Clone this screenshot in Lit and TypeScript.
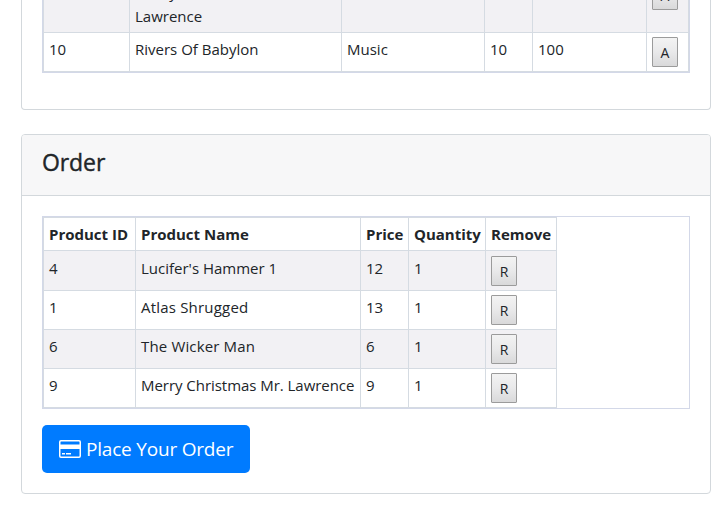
import { LitElement, html, css } from "lit";
import { customElement } from "lit/decorators.js";
import { styleMap } from "lit/directives/style-map.js";

interface OrderLine {
  id: number;
  name: string;
  price: number;
  quantity: number;
  tracking: number;
}

const LINES: OrderLine[] = [
  { id: 4, name: "Lucifer's Hammer 1", price: 12, quantity: 1, tracking: 0 },
  { id: 1, name: "Atlas Shrugged", price: 13, quantity: 1, tracking: 0.2 },
  { id: 6, name: "The Wicker Man", price: 6, quantity: 1, tracking: 0.15 },
  { id: 9, name: "Merry Christmas Mr. Lawrence", price: 9, quantity: 1, tracking: -0.04 },
];

@customElement("app-root")
export class AppRoot extends LitElement {
  static styles = css`
    :host {
      display: block;
      height: 524px;
      overflow: hidden;
      background: #fff;
      color: #212529;
      font: 15px/24px "Open Sans", "Noto Sans", sans-serif;
    }
    * { box-sizing: border-box; }
    .card {
      width: 690px;
      margin-left: 21px;
      border: 1px solid #d3d8dc;
      border-radius: 4px;
      padding: 0 20px;
    }
    .products {
      height: 110px;
      border-top: 0;
      border-radius: 0 0 4px 4px;
    }
    .order { margin-top: 24px; height: 360px; }
    .card-header {
      height: 61px;
      margin: 0 -20px 20px;
      padding: 13px 20px 0;
      border-bottom: 1px solid #d3d8dc;
      border-radius: 3px 3px 0 0;
      background: #f7f7f8;
    }
    h4 {
      margin: 0;
      font-size: 23px;
      line-height: 29px;
      font-weight: 500;
      letter-spacing: -0.1px;
      -webkit-text-stroke: 0.4px #212529;
    }
    .frame { width: 648px; border: 1px solid #d3d8e8; }
    .products .frame { height: 73px; border-top: 0; }
    .order .frame { height: 193px; }
    .row {
      display: grid;
      height: 39px;
      border-right: 1px solid #d5dbe2;
    }
    .products .row { grid-template-columns: 86px 212px 143px 48px 114px 1fr; }
    .order .row { width: 514px; grid-template-columns: 92px 225px 48px 77px 1fr; }
    .cell {
      border-left: 1px solid #d5dbe2;
      border-top: 1px solid #d5dbe2;
      padding: 4px 0 0 5px;
      white-space: nowrap;
      overflow: hidden;
    }
    .striped { background: #f2f1f4; }
    .products .partial { height: 32px; }
    .partial .cell { border-top: 0; padding-top: 0; display: flex; flex-direction: column; justify-content: flex-end; padding-bottom: 4px; }
    .partial .action { padding-bottom: 22px; }
    .products .last, .order .last { border-bottom: 1px solid #d5dbe2; height: 40px; }
    .order .head { height: 33px; font-weight: 700; }
    .order .first { height: 40px; }
    .first .cell { padding-top: 5px; }
    .t { display: block; height: 24px; }
    .small {
      display: block;
      width: 26px;
      height: 30px;
      flex: none;
      padding: 1px 0 0;
      border: 1px solid #9b9b9b;
      border-radius: 1px;
      background: linear-gradient(#f3f3f3, #e9e9ea 50%, #d9d9da);
      font: 14px/27px "Open Sans", "Noto Sans", sans-serif;
      color: #212529;
      text-align: center;
    }
    .place {
      display: flex;
      align-items: center;
      gap: 5px;
      width: 208px;
      height: 48px;
      margin-top: 16px;
      padding: 0 0 0 17px;
      border: 0;
      border-radius: 5px;
      background: #007bff;
      color: #fff;
      font: 19px/30px "Open Sans", "Noto Sans", sans-serif;
      letter-spacing: -0.2px;
      white-space: nowrap;
    }
    .place svg { flex: none; }
  `;

  render() {
    return html`
      <section class="card products">
        <div class="frame">
          <div class="row striped partial">
            <div class="cell"></div>
            <div class="cell"><span class="t">Merry Christmas Mr.</span><span class="t">Lawrence</span></div>
            <div class="cell"></div>
            <div class="cell"></div>
            <div class="cell"></div>
            <div class="cell action"><button class="small">A</button></div>
          </div>
          <div class="row last">
            <div class="cell"><span class="t">10</span></div>
            <div class="cell"><span class="t">Rivers Of Babylon</span></div>
            <div class="cell"><span class="t">Music</span></div>
            <div class="cell"><span class="t">10</span></div>
            <div class="cell"><span class="t">100</span></div>
            <div class="cell"><button class="small">A</button></div>
          </div>
        </div>
      </section>
      <section class="card order">
        <header class="card-header"><h4>Order</h4></header>
        <div class="frame">
          <div class="row head">
            ${["Product ID", "Product Name", "Price", "Quantity", "Remove"].map(
              (label) => html`<div class="cell"><span class="t">${label}</span></div>`
            )}
          </div>
          ${LINES.map(
            (line, i) => html`
              <div class="row ${i % 2 ? "" : "striped"} ${i === 0 ? "first" : ""} ${i === LINES.length - 1 ? "last" : ""}">
                <div class="cell"><span class="t">${line.id}</span></div>
                <div class="cell"><span class="t" style=${styleMap({ letterSpacing: `${line.tracking}px` })}>${line.name}</span></div>
                <div class="cell"><span class="t">${line.price}</span></div>
                <div class="cell"><span class="t">${line.quantity}</span></div>
                <div class="cell"><button class="small">R</button></div>
              </div>
            `
          )}
        </div>
        <button class="place">
          <svg width="22" height="18" viewBox="0 0 22 18">
            <rect x="0.75" y="0.75" width="20.5" height="16.5" rx="1.2" fill="none" stroke="#fff" stroke-width="1.5" />
            <path d="M1 4.5h20v4.5H1zM3 13h3v1.5H3zM7 13h5v1.5H7z" fill="#fff" />
          </svg>
          <span>Place Your Order</span>
        </button>
      </section>
    `;
  }
}
